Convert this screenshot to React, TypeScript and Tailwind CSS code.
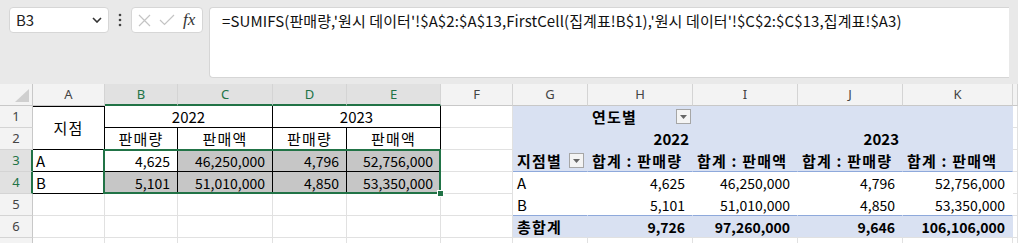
import React from 'react';

const colStart: Record<number, string> = {
  1: 'col-start-1', 2: 'col-start-2', 3: 'col-start-3', 4: 'col-start-4', 5: 'col-start-5',
  6: 'col-start-6', 7: 'col-start-7', 8: 'col-start-8', 9: 'col-start-9', 10: 'col-start-10',
  11: 'col-start-11', 12: 'col-start-12', 13: 'col-start-13',
};
const rowStart: Record<number, string> = {
  1: 'row-start-1', 2: 'row-start-2', 3: 'row-start-3', 4: 'row-start-4', 5: 'row-start-5',
  6: 'row-start-6', 7: 'row-start-7', 8: 'row-start-8',
};
const colSpan: Record<number, string> = { 1: '', 2: 'col-span-2', 4: 'col-span-4' };
const rowSpan: Record<number, string> = { 1: '', 2: 'row-span-2' };

const FONT = "font-['Noto_Sans_CJK_KR','Noto_Sans',sans-serif]";
const HEAD_FONT = "font-['Noto_Sans','Noto_Sans_CJK_KR',sans-serif]";

function Cell({
  c, r, cs = 1, rs = 1, className = '', children,
}: { c: number; r: number; cs?: number; rs?: number; className?: string; children?: React.ReactNode }) {
  return (
    <div className={`${colStart[c]} ${rowStart[r]} ${colSpan[cs]} ${rowSpan[rs]} flex min-w-0 items-center overflow-hidden whitespace-nowrap text-[14px] leading-none text-black ${className}`}>
      {children}
    </div>
  );
}

// Hangul in the sheet is set a little wider than the digits
function K({ children }: { children: React.ReactNode }) {
  return <span className="text-[15px] tracking-[1.2px]">{children}</span>;
}

function FilterButton() {
  return (
    <span className="flex h-[15px] w-[15px] items-center justify-center border border-[#a6a6a6] bg-[#f4f4f4]">
      <svg width="7" height="4" viewBox="0 0 7 4"><path d="M0 0h7L3.5 4z" fill="#666" /></svg>
    </span>
  );
}

const letters = ['A', 'B', 'C', 'D', 'E', 'F', 'G', 'H', 'I', 'J', 'K', ''];

export default function App() {
  const grid = 'border-r border-b border-[#e1e1e1] bg-white';
  const blk = 'border-r border-b border-black bg-white';
  const selFill = 'border-r border-b border-black bg-[#c6c6c6]';
  const blue = 'bg-[#d9e1f2] border-r border-b border-[#d9e1f2]';
  const blueLine = 'bg-[#d9e1f2] border-r border-[#d9e1f2] border-b border-b-[#8ea9db]';
  const white = 'bg-white border-r border-b border-white';
  const whiteLine = 'bg-white border-r border-white border-b border-b-[#8ea9db]';
  const total = 'bg-[#d9e1f2] border-r border-[#d9e1f2] border-b border-b-[#e1e1e1] font-bold';

  return (
    <div className={`h-[243px] w-[1018px] overflow-hidden bg-[#e9e9e9] ${FONT}`}>
      {/* formula bar */}
      <div className="flex h-[84px] items-start px-[9px] pt-[7px]">
        <div className="flex h-[26px] w-[100px] items-center justify-between rounded-[4px] border border-[#d6d6d6] bg-white px-[6px]">
          <span className="text-[15px] text-[#222]">B3</span>
          <svg width="10" height="6" viewBox="0 0 10 6"><path d="M1 1l4 4 4-4" stroke="#333" strokeWidth="1.6" fill="none" /></svg>
        </div>
        <div className="flex h-[26px] w-[22px] items-center justify-center">
          <svg width="4" height="14" viewBox="0 0 4 14"><circle cx="2" cy="2" r="1.3" fill="#444" /><circle cx="2" cy="7" r="1.3" fill="#444" /><circle cx="2" cy="12" r="1.3" fill="#444" /></svg>
        </div>
        <div className="flex h-[26px] w-[72px] items-center gap-[8px] rounded-[4px] border border-[#d6d6d6] bg-white pl-[6px]">
          <svg width="13" height="13" viewBox="0 0 13 13"><path d="M1 1l11 11M12 1L1 12" stroke="#c4c4c4" strokeWidth="1.2" /></svg>
          <svg width="16" height="12" viewBox="0 0 16 12"><path d="M1 6l4.5 4.5L15 1" stroke="#c4c4c4" strokeWidth="1.2" fill="none" /></svg>
          <span className="font-['Liberation_Serif',serif] text-[17px] italic text-[#333]">fx</span>
        </div>
        <div className="ml-[6px] h-[71px] flex-1 rounded-l-[4px] border border-r-0 border-[#d6d6d6] bg-white pl-[12px] pt-[4px] text-[15px] leading-[18px] tracking-[0.1px] text-[#111]">
          =SUMIFS(판매량,'원시 데이터'!$A$2:$A$13,FirstCell(집계표!B$1),'원시 데이터'!$C$2:$C$13,집계표!$A3)
        </div>
      </div>

      {/* sheet */}
      <div className="grid h-[159px] grid-cols-[33px_72px_73px_95px_74px_94px_72px_75px_105px_105px_105px_110px_1fr] grid-rows-[22px_22px_22px_22px_22px_22px_22px_22px]">
        {/* corner */}
        <div className="col-start-1 row-start-1 flex items-end justify-end border-r border-b border-[#c8c8c8] bg-[#f3f3f3] pb-[3px] pr-[3px]">
          <svg width="14" height="13" viewBox="0 0 14 13"><path d="M14 0v13H0z" fill="#cfcfcf" /></svg>
        </div>
        {letters.map((l, i) => {
          const sel = i >= 1 && i <= 4;
          return (
            <div
              key={i}
              className={`${colStart[i + 2]} row-start-1 flex items-center justify-center border-r border-[#d4d4d4] ${HEAD_FONT} text-[13px] ${
                sel ? 'border-b-2 border-b-[#217346] bg-[#e1e1e1] pt-[1px] text-[#217346]' : 'border-b border-b-[#c8c8c8] bg-[#f3f3f3] text-[#444]'
              }`}
            >
              {l}
            </div>
          );
        })}
        {/* row headers */}
        {[1, 2, 3, 4, 5, 6, 7].map((n) => {
          const sel = n === 3 || n === 4;
          return (
            <div
              key={n}
              className={`col-start-1 ${rowStart[n + 1]} flex items-center justify-center border-b border-[#d4d4d4] ${HEAD_FONT} text-[13px] ${
                sel ? 'border-r-2 border-r-[#217346] bg-[#e1e1e1] pl-[1px] text-[#217346]' : 'border-r border-r-[#c8c8c8] bg-[#f3f3f3] text-[#444]'
              }`}
            >
              {n < 7 ? n : ''}
            </div>
          );
        })}

        {/* left table */}
        <Cell c={2} r={2} rs={2} className={`${blk} justify-center shadow-[inset_0_1px_0_#000]`}><K>지점</K></Cell>
        <Cell c={3} r={2} cs={2} className={`${blk} justify-center text-[15px]`}>2022</Cell>
        <Cell c={5} r={2} cs={2} className={`${blk} justify-center text-[15px]`}>2023</Cell>
        <Cell c={3} r={3} className={`${blk} justify-center`}><K>판매량</K></Cell>
        <Cell c={4} r={3} className={`${blk} justify-center`}><K>판매액</K></Cell>
        <Cell c={5} r={3} className={`${blk} justify-center`}><K>판매량</K></Cell>
        <Cell c={6} r={3} className={`${blk} justify-center`}><K>판매액</K></Cell>
        <Cell c={2} r={4} className={`${blk} pl-[3px] text-[15px]`}>A</Cell>
        <Cell c={3} r={4} className={`${blk} justify-end pr-[7px]`}>4,625</Cell>
        <Cell c={4} r={4} className={`${selFill} justify-end pr-[7px]`}>46,250,000</Cell>
        <Cell c={5} r={4} className={`${selFill} justify-end pr-[7px]`}>4,796</Cell>
        <Cell c={6} r={4} className={`${selFill} justify-end pr-[7px]`}>52,756,000</Cell>
        <Cell c={2} r={5} className={`${blk} pl-[3px] text-[15px]`}>B</Cell>
        <Cell c={3} r={5} className={`${selFill} justify-end pr-[7px]`}>5,101</Cell>
        <Cell c={4} r={5} className={`${selFill} justify-end pr-[7px]`}>51,010,000</Cell>
        <Cell c={5} r={5} className={`${selFill} justify-end pr-[7px]`}>4,850</Cell>
        <Cell c={6} r={5} className={`${selFill} justify-end pr-[7px]`}>53,350,000</Cell>

        {/* empty grid cells */}
        {[6, 7, 8].map((r) => [2, 3, 4, 5, 6].map((c) => <Cell key={`${c}-${r}`} c={c} r={r} className={grid} />))}
        {[2, 3, 4, 5, 6, 7, 8].map((r) => <Cell key={`f-${r}`} c={7} r={r} className={grid} />)}
        {[8, 9, 10, 11, 12].map((c) => <Cell key={`${c}-8`} c={c} r={8} className={grid} />)}
        {[2, 3, 4, 5, 6, 7, 8].map((r) => <Cell key={`l-${r}`} c={13} r={r} className={grid} />)}

        {/* selection */}
        <div className="pointer-events-none relative col-span-4 col-start-3 row-span-2 row-start-4 -ml-[2px] -mt-[1px] border-2 border-[#217346]">
          <div className="absolute -bottom-[5px] -right-[5px] h-[7px] w-[7px] border border-white bg-[#217346]" />
        </div>

        {/* pivot table */}
        <Cell c={8} r={2} className={blue} />
        <Cell c={9} r={2} className={`${blue} justify-between pl-[4px] pr-[1px] font-bold`}>
          <K>연도별</K>
          <FilterButton />
        </Cell>
        <Cell c={10} r={2} className={blue} />
        <Cell c={11} r={2} className={blue} />
        <Cell c={12} r={2} className={blue} />

        <Cell c={8} r={3} className={blue} />
        <Cell c={9} r={3} className={`${blue} justify-end pr-[3px] text-[15px] font-bold`}>2022</Cell>
        <Cell c={10} r={3} className={blue} />
        <Cell c={11} r={3} className={`${blue} justify-end pr-[3px] text-[15px] font-bold`}>2023</Cell>
        <Cell c={12} r={3} className={blue} />

        <Cell c={8} r={4} className={`${blueLine} justify-between pl-[4px] pr-[3px] font-bold`}>
          <K>지점별</K>
          <FilterButton />
        </Cell>
        <Cell c={9} r={4} className={`${blueLine} pl-[4px] font-bold`}><K>합계 : 판매량</K></Cell>
        <Cell c={10} r={4} className={`${blueLine} pl-[4px] font-bold`}><K>합계 : 판매액</K></Cell>
        <Cell c={11} r={4} className={`${blueLine} pl-[4px] font-bold`}><K>합계 : 판매량</K></Cell>
        <Cell c={12} r={4} className={`${blueLine} pl-[4px] font-bold`}><K>합계 : 판매액</K></Cell>

        <Cell c={8} r={5} className={`${white} pl-[4px] text-[15px]`}>A</Cell>
        <Cell c={9} r={5} className={`${white} justify-end pr-[7px]`}>4,625</Cell>
        <Cell c={10} r={5} className={`${white} justify-end pr-[7px]`}>46,250,000</Cell>
        <Cell c={11} r={5} className={`${white} justify-end pr-[7px]`}>4,796</Cell>
        <Cell c={12} r={5} className={`${white} justify-end pr-[7px]`}>52,756,000</Cell>

        <Cell c={8} r={6} className={`${whiteLine} pl-[4px] text-[15px]`}>B</Cell>
        <Cell c={9} r={6} className={`${whiteLine} justify-end pr-[7px]`}>5,101</Cell>
        <Cell c={10} r={6} className={`${whiteLine} justify-end pr-[7px]`}>51,010,000</Cell>
        <Cell c={11} r={6} className={`${whiteLine} justify-end pr-[7px]`}>4,850</Cell>
        <Cell c={12} r={6} className={`${whiteLine} justify-end pr-[7px]`}>53,350,000</Cell>

        <Cell c={8} r={7} className={`${total} pl-[4px]`}><K>총합계</K></Cell>
        <Cell c={9} r={7} className={`${total} justify-end pr-[7px]`}>9,726</Cell>
        <Cell c={10} r={7} className={`${total} justify-end pr-[7px]`}>97,260,000</Cell>
        <Cell c={11} r={7} className={`${total} justify-end pr-[7px]`}>9,646</Cell>
        <Cell c={12} r={7} className={`${total} justify-end pr-[7px]`}>106,106,000</Cell>
      </div>
    </div>
  );
}
